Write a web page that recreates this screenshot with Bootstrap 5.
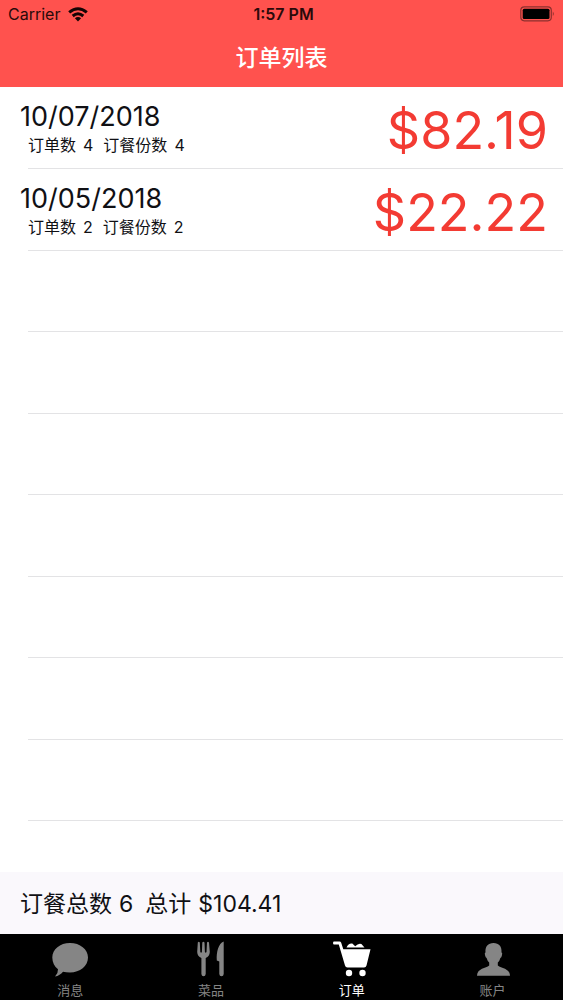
<!DOCTYPE html>
<html lang="zh-CN">
<head>
<meta charset="utf-8">
<meta name="viewport" content="width=device-width, initial-scale=1">
<title>订单列表</title>
<link href="https://cdn.jsdelivr.net/npm/bootstrap@5.3.0/dist/css/bootstrap.min.css" rel="stylesheet">
<style>
  body { font-family: Inter, "Noto Sans CJK SC", sans-serif; color: #101014; background: #fff; }
  .app-head { background: #ff524e; }
  .status-bar { height: 28px; padding: 0 8px; font-size: 16px; line-height: 28px; color: #2a0a0a; }
  .clock { font-weight: 600; padding-left: 4px; }
  .app-title { height: 59px; font-size: 23px; line-height: 60px; font-weight: 500; color: #fff; }
  .order-row { height: 81px; padding: 3px 15px 0 20px; }
  .order-row:first-child, .order-row:nth-child(even) { height: 82px; }
  .order-row:not(:last-child) { background: linear-gradient(#e3e3e5, #e3e3e5) 28px 100% / 100% 1px no-repeat; }
  .order-row:last-child { height: 51px; }
  .order-date { font-size: 27px; line-height: 30px; }
  .order-meta { font-size: 16px; line-height: 26px; padding-left: 8px; gap: 10px; }
  .pair { display: inline-flex; gap: 7px; }
  .order-price { font-size: 52px; line-height: 74px; padding-top: 2px; color: #f33b33; }
  .summary { min-height: 62px; padding: 2px 20px 0; font-size: 23px; background: #faf8fc; gap: 12px; }
  .tabs { background: #000; height: 66px; }
  .tabs a { color: #858585; font-size: 13px; line-height: 20px; padding-top: 6px; }
  .tabs a.active { color: #fff; }
  .tabs svg { width: 40px; height: 40px; }
</style>
</head>
<body>
<div class="d-flex flex-column min-vh-100">
  <header class="app-head">
    <div class="status-bar row g-0 align-items-center">
      <div class="col d-flex align-items-center gap-2">
        <span>Carrier</span>
        <svg width="20" height="15" viewBox="0 0 20 15" fill="none" stroke="#150404" stroke-width="3" aria-hidden="true"><path d="M1.2 5.4Q10-2 18.800 5.400M4.700 9Q10 4.500 15.300 9"/><path d="M10 14.500 6.900 11.300Q10 8.800 13.100 11.300Z" fill="#150404" stroke="none"/></svg>
      </div>
      <div class="col-auto clock">1:57 PM</div>
      <div class="col d-flex justify-content-end">
        <svg width="35" height="16" viewBox="0 0 35 16" aria-hidden="true"><rect x=".8" y=".8" width="30.500" height="14" rx="3.500" fill="none" stroke="#8d302e" stroke-width="1.200"/><rect x="2.700" y="2.700" width="26.800" height="10.200" rx="1.500"/><path d="M32.800 5.500Q34.800 7.800 32.800 10Z" fill="#8d302e"/></svg>
      </div>
    </div>
    <h1 class="app-title text-center mb-0">订单列表</h1>
  </header>

  <main class="flex-grow-1">
    <ul class="list-unstyled mb-0">
      <li class="order-row d-flex justify-content-between align-items-center">
        <div>
          <div class="order-date">10/07/2018</div>
          <div class="order-meta d-flex"><span class="pair"><span>订单数</span> <span>4</span></span><span class="pair"><span>订餐份数</span> <span>4</span></span></div>
        </div>
        <div class="order-price">$82.19</div>
      </li>
      <li class="order-row d-flex justify-content-between align-items-center">
        <div>
          <div class="order-date">10/05/2018</div>
          <div class="order-meta d-flex"><span class="pair"><span>订单数</span> <span>2</span></span><span class="pair"><span>订餐份数</span> <span>2</span></span></div>
        </div>
        <div class="order-price">$22.22</div>
      </li>
      <li class="order-row"></li>
      <li class="order-row"></li>
      <li class="order-row"></li>
      <li class="order-row"></li>
      <li class="order-row"></li>
      <li class="order-row"></li>
      <li class="order-row"></li>
      <li class="order-row"></li>
    </ul>
  </main>

  <div class="summary d-flex align-items-center"><span class="pair"><span>订餐总数</span> <span>6</span></span><span class="pair"><span>总计</span> <span>$104.41</span></span></div>

  <nav class="tabs nav nav-fill">
    <a href="#" class="nav-item col d-flex flex-column align-items-center text-decoration-none">
      <svg viewBox="0 0 40 40" fill="currentColor" aria-hidden="true"><path d="M20 3C30 3 38 9.300 38 17.500C38 26 30 32.500 20 32.500Q16 32.500 13 31.700Q10 35.500 5 36.500Q8.300 33 8 29.300C4.500 26.500 2.300 22.500 2.300 17.500C2.300 9.300 10 3 20 3Z"/></svg>
      <span>消息</span>
    </a>
    <a href="#" class="nav-item col d-flex flex-column align-items-center text-decoration-none">
      <svg viewBox="0 0 40 40" fill="currentColor" aria-hidden="true"><path d="M6.800 2.500Q7.800 .8 8.800 2.500L9.300 12Q10.100 13.300 10.900 12L11.300 2.500Q12.400 .8 13.500 2.500L13.900 12Q14.700 13.300 15.500 12L16 2.500Q17 .8 18 2.500L18.800 12Q18.600 16.500 14.700 18L14.700 34Q14.400 36.300 12.600 36.300Q10.600 36.300 10.400 34L10.400 18Q6.400 16.500 6.200 12ZM32.700 1.500V34Q32.500 36.300 30.500 36.300Q28.500 36.300 28.300 34V21.500L25.800 20.500C25.200 12 27.500 3.500 32.700 1.500Z"/></svg>
      <span>菜品</span>
    </a>
    <a href="#" class="nav-item col active d-flex flex-column align-items-center text-decoration-none" aria-current="page">
      <svg viewBox="0 0 40 40" fill="currentColor" aria-hidden="true"><path d="M1.600 1.500H7.500Q8.700 1.500 9.200 2.800L11.300 9.200H38.500L34.500 25.500Q34 27.500 32 27.500H15.500Q13.500 27.500 13 25.500L6.800 4.500H1.600Q.2 3 1.600 1.500Z"/><path d="M14.500 7.500Q16.500 3 20.300 3.600L23.200 6.200Q26.500 2.800 29.400 4L32.500 7.500Z"/><circle cx="17" cy="33" r="3.200"/><circle cx="30.500" cy="33" r="3.200"/></svg>
      <span>订单</span>
    </a>
    <a href="#" class="nav-item col d-flex flex-column align-items-center text-decoration-none">
      <svg viewBox="0 0 40 40" fill="currentColor" aria-hidden="true"><path d="M20.500 3C26 3 29 6.500 28.500 12.300Q29.800 13 28.900 15.500Q28.400 17.500 27.400 18Q26.600 21 24.800 22.500V25.500C28 28.500 36.800 28 37 35.800H4C4.200 28 13 28.500 16.200 25.500V22.500Q14.400 21 13.600 18Q12.600 17.500 12.100 15.500Q11.200 13 12.500 12.300C12 6.500 15 3 20.500 3Z"/></svg>
      <span>账户</span>
    </a>
  </nav>
</div>
<script src="https://cdn.jsdelivr.net/npm/bootstrap@5.3.0/dist/js/bootstrap.bundle.min.js"></script>
</body>
</html>
